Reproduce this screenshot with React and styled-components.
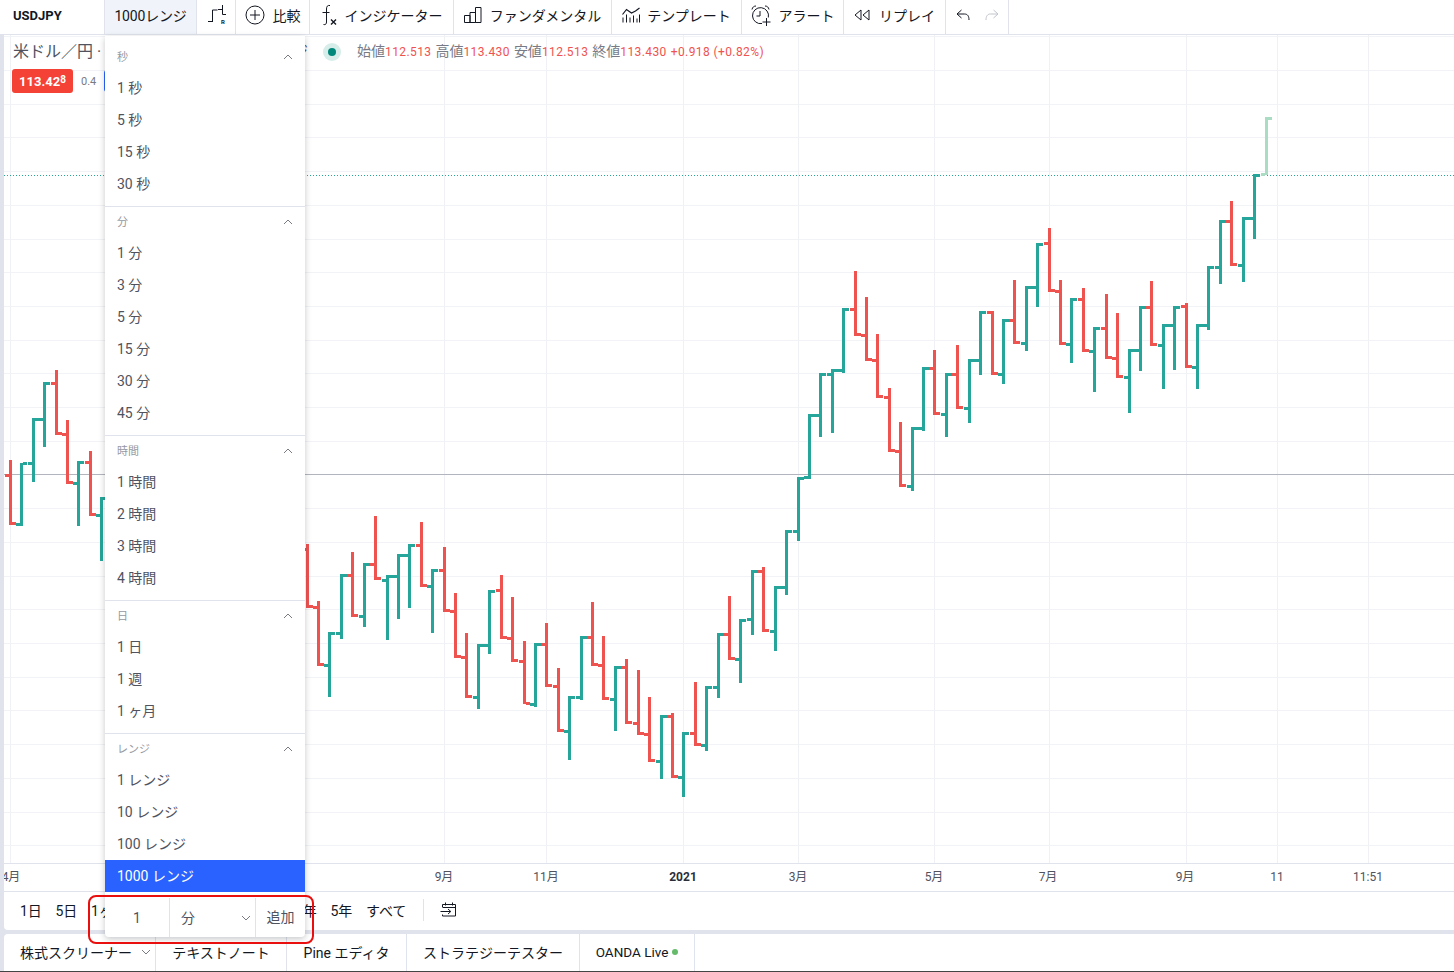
import React from 'react';
import styled, { createGlobalStyle } from 'styled-components';

const GlobalStyle = createGlobalStyle`
  html, body { margin: 0; padding: 0; background: #e0e3eb; }
  body { font-family: Roboto, "Noto Sans CJK JP", sans-serif; color: #131722; }
  * { box-sizing: border-box; }
`;

const GREEN = '#26a69a';
const RED = '#ef5350';
const PALE = '#a9dcc3';

// bars read off the crops: [stem x, high, low, open, close, colour], grouped by crop origin
const groups = [
  { ox: 0, oy: 360, bars: [
    [31, 300, 494, 346, 490, RED], [64, 308, 497, 494, 310, GREEN], [100, 175, 365, 310, 178, GREEN],
    [133, 67, 260, 178, 70, GREEN], [169, 30, 224, 70, 220, RED], [202, 180, 372, 223, 367, RED],
    [235, 304, 497, 370, 307, GREEN], [271, 273, 467, 307, 463, RED], [304, 411, 603, 466, 414, GREEN],
  ] },
  { ox: 300, oy: 500, bars: [
    [22, 132, 323, 148, 320, RED], [55, 303, 497, 323, 493, RED], [88, 397, 591, 496, 400, GREEN],
    [124, 223, 417, 400, 226, GREEN], [157, 156, 350, 226, 346, RED], [193, 190, 381, 349, 193, GREEN],
    [226, 48, 240, 193, 235, RED], [262, 226, 420, 241, 229, GREEN], [295, 163, 357, 229, 166, GREEN],
    [328, 132, 324, 166, 136, GREEN], [364, 66, 261, 136, 256, RED], [397, 208, 399, 259, 211, GREEN],
    [433, 141, 335, 211, 331, RED], [466, 279, 474, 334, 469, RED], [499, 399, 593, 472, 589, RED],
    [535, 433, 627, 592, 436, GREEN], [568, 271, 462, 436, 274, GREEN], [604, 225, 416, 271, 412, RED],
    [637, 291, 486, 415, 481, RED], [673, 423, 613, 484, 609, RED], [706, 430, 621, 612, 433, GREEN],
    [739, 369, 560, 433, 556, RED], [775, 504, 695, 559, 691, RED], [808, 589, 780, 694, 592, GREEN],
    [844, 408, 600, 592, 412, GREEN], [877, 306, 497, 412, 493, RED], [910, 408, 600, 496, 595, RED],
    [946, 499, 693, 598, 502, GREEN], [979, 477, 671, 502, 667, RED], [1015, 510, 704, 670, 700, RED],
    [1048, 591, 786, 703, 781, RED], [1084, 646, 837, 784, 649, GREEN], [1117, 639, 833, 649, 829, RED],
    [1150, 697, 891, 832, 700, GREEN], [1186, 546, 737, 700, 733, RED], [1219, 559, 753, 736, 562, GREEN],
    [1255, 399, 593, 562, 402, GREEN],
  ] },
  { ox: 670, oy: 260, bars: [
    [178, 1008, 1199, 1122, 1195, RED], [211, 1077, 1269, 1197, 1080, GREEN], [247, 930, 1125, 1078, 933, GREEN],
    [280, 921, 1115, 933, 1110, RED], [316, 979, 1173, 1113, 982, GREEN], [349, 811, 1005, 982, 814, GREEN],
    [385, 652, 843, 814, 655, GREEN], [418, 463, 657, 652, 466, GREEN], [451, 340, 531, 466, 343, GREEN],
    [487, 327, 519, 343, 331, GREEN], [520, 144, 339, 331, 148, GREEN], [556, 33, 228, 148, 223, RED],
    [589, 111, 303, 226, 298, RED], [622, 222, 414, 301, 409, RED], [658, 384, 576, 412, 571, RED],
    [691, 486, 681, 574, 676, RED], [727, 502, 693, 679, 505, GREEN], [760, 321, 513, 505, 325, GREEN],
    [793, 270, 465, 325, 460, RED], [829, 340, 531, 463, 343, GREEN], [862, 255, 447, 343, 442, RED],
    [898, 298, 489, 445, 301, GREEN], [931, 153, 345, 301, 157, GREEN], [967, 153, 345, 157, 341, RED],
    [1000, 177, 372, 343, 181, GREEN],
  ] },
  { ox: 1000, oy: 100, bars: [
    [43, 540, 732, 660, 727, RED], [79, 558, 753, 730, 562, GREEN], [112, 429, 621, 562, 433, GREEN],
    [148, 384, 576, 430, 571, RED], [181, 540, 735, 574, 730, RED], [214, 594, 789, 733, 598, GREEN],
    [250, 564, 756, 598, 751, RED], [283, 681, 876, 754, 685, GREEN], [319, 582, 777, 685, 772, RED],
    [352, 639, 834, 775, 829, RED], [388, 747, 939, 832, 751, GREEN], [421, 618, 813, 751, 622, GREEN],
    [454, 543, 738, 622, 733, RED], [490, 672, 867, 736, 676, GREEN], [523, 618, 810, 676, 622, GREEN],
    [559, 609, 804, 619, 799, RED], [592, 672, 867, 802, 676, GREEN], [625, 498, 690, 676, 502, GREEN],
    [661, 360, 552, 502, 364, GREEN], [694, 303, 498, 364, 493, RED], [730, 351, 546, 496, 355, GREEN],
    [763, 222, 417, 355, 226, GREEN], [799, 51, 226, 223, 55, PALE],
  ] },
];

const bars = groups.flatMap(({ ox, oy, bars }) =>
  bars.map(([x, h, l, o, c, color]) => ({
    x: Math.round(ox + x / 3 - 1.5),
    high: Math.round(oy + h / 3),
    low: Math.round(oy + l / 3),
    open: Math.round(oy + o / 3 - 1.5),
    close: Math.round(oy + c / 3 - 1.5),
    color,
  }))
);

const gridY = [36, 70, 104, 137, 171, 205, 239, 272, 306, 340, 373, 407, 441, 508, 542, 576, 609, 643, 677, 710, 744, 778, 812, 845];
const gridX = [10, 444, 546, 683, 798, 934, 1049, 1186, 1277, 1368];

const Page = styled.div`
  position: relative;
  width: 1454px;
  height: 972px;
  overflow: hidden;
  display: flex;
  flex-direction: column;
  background: #e0e3eb;
`;

const TopBar = styled.div`
  display: flex;
  height: 34px;
  background: #fff;
  margin-bottom: 1px;
  flex: none;
`;

const TopItem = styled.div`
  width: ${p => p.$w}px;
  flex: none;
  display: flex;
  align-items: center;
  justify-content: ${p => (p.$left ? 'flex-start' : 'center')};
  gap: ${p => p.$gap || 8}px;
  padding-left: ${p => p.$pl || 0}px;
  padding-bottom: 4px;
  border-right: 1px solid #e0e3eb;
  background: ${p => (p.$active ? '#f0f3fa' : '#fff')};
  font-size: ${p => (p.$bold ? 13 : 14)}px;
  font-weight: ${p => (p.$bold ? 700 : 400)};
  letter-spacing: ${p => (p.$active ? -0.2 : 0)}px;
  white-space: nowrap;
`;

const TopRest = styled.div`
  flex: 1;
  background: #fff;
`;

const Body = styled.div`
  flex: 1;
  min-height: 0;
  display: flex;
  flex-direction: column;
  padding-left: 4px;
  gap: 4px;
`;

const ChartPanel = styled.div`
  height: 895px;
  flex: none;
  display: flex;
  flex-direction: column;
  background: #fff;
  border-bottom-left-radius: 4px;
  overflow: hidden;
`;

const Chart = styled.div`
  position: relative;
  height: 828px;
  flex: none;
`;

const ChartSvg = styled.svg`
  display: block;
`;

const Legend = styled.div`
  position: absolute;
  left: 9px;
  top: 7px;
  width: 295px;
  display: flex;
  flex-direction: column;
  gap: 7px;
`;

const Title = styled.div`
  display: flex;
  justify-content: space-between;
  font-size: 16px;
  line-height: 20px;
  color: #50535e;
  white-space: nowrap;
`;

const PriceRow = styled.div`
  display: flex;
  align-items: center;
  gap: 8px;
  margin-left: -1px;
`;

const PriceTag = styled.div`
  width: 61px;
  height: 24px;
  border-radius: 3px;
  background: #f44336;
  color: #fff;
  font-size: 13px;
  font-weight: 700;
  display: flex;
  align-items: center;
  justify-content: center;
`;

const PriceSup = styled.span`
  font-size: 10px;
  position: relative;
  top: -2px;
`;

const Spread = styled.span`
  font-size: 11px;
  color: #787b86;
`;

const AskTag = styled.div`
  width: 30px;
  height: 22px;
  border-radius: 3px;
  background: #2962ff;
`;

const Ohlc = styled.div`
  position: absolute;
  left: 319px;
  top: 7px;
  height: 20px;
  display: flex;
  align-items: center;
`;

const OhlcText = styled.div`
  display: flex;
  align-items: baseline;
  gap: 4px;
  font-size: 14px;
  line-height: 20px;
  color: #787b86;
  white-space: nowrap;
  position: relative;
  top: -1px;
`;

const Status = styled.span`
  width: 18px;
  height: 18px;
  border-radius: 50%;
  background: #d6ede9;
  display: flex;
  align-items: center;
  justify-content: center;
  margin-right: 16px;
  &::after {
    content: '';
    width: 8px;
    height: 8px;
    border-radius: 50%;
    background: #00897b;
  }
`;

const OhlcValue = styled.span`
  font-size: 12px;
  color: #ef5350;
  letter-spacing: 0.4px;
`;

const TimeAxis = styled.div`
  position: relative;
  height: 29px;
  flex: none;
  border-top: 1px solid #e0e3eb;
  border-bottom: 1px solid #e0e3eb;
  overflow: hidden;
`;

const AxisLabel = styled.span`
  position: absolute;
  top: 5px;
  left: ${p => p.$x - 4}px;
  transform: translateX(-50%);
  font-size: 12px;
  line-height: 16px;
  font-weight: ${p => (p.$bold ? 700 : 400)};
  color: ${p => (p.$bold ? '#2a2e39' : '#50535e')};
  white-space: nowrap;
`;

const RangeBar = styled.div`
  flex: 1;
  display: flex;
  align-items: center;
  padding: 0 0 2px 16px;
  font-size: 14px;
  color: #131722;
`;

const RangeItem = styled.span`
  margin-right: 13.6px;
  white-space: nowrap;
`;

const RangeDivider = styled.span`
  width: 1px;
  height: 22px;
  background: #e0e3eb;
  margin: 0 16px 0 3px;
`;

const Tabs = styled.div`
  flex: 1;
  display: flex;
  background: #fff;
  border-top-left-radius: 4px;
`;

const Tab = styled.div`
  width: ${p => p.$w}px;
  flex: none;
  display: flex;
  align-items: center;
  justify-content: ${p => (p.$pl ? 'flex-start' : 'center')};
  gap: ${p => p.$gap || 0}px;
  padding-left: ${p => p.$pl || 0}px;
  padding-bottom: 2px;
  border-right: 1px solid #e0e3eb;
  font-size: ${p => p.$size || 14}px;
  white-space: nowrap;
`;

const LiveDot = styled.span`
  width: 6px;
  height: 6px;
  border-radius: 50%;
  background: #66bb6a;
`;

const BottomLine = styled.div`
  height: 1px;
  flex: none;
  background: #444;
`;

const Menu = styled.div`
  position: absolute;
  left: 105px;
  top: 36px;
  width: 200px;
  height: 901px;
  padding-top: 6px;
  background: #fff;
  border-radius: 0 0 4px 4px;
  box-shadow: 0 2px 6px rgba(19, 23, 34, 0.24);
  display: flex;
  flex-direction: column;
`;

const Section = styled.div`
  padding-bottom: ${p => (p.$last ? 0 : 6)}px;
  border-bottom: ${p => (p.$last ? 'none' : '1px solid #e0e3eb')};
`;

const SectionHead = styled.div`
  height: 30px;
  display: flex;
  align-items: center;
  justify-content: space-between;
  padding: 0 12px 2px;
  font-size: 11px;
  color: #9598a1;
  svg { margin-top: 2px; }
`;

const MenuItem = styled.div`
  height: 32px;
  display: flex;
  align-items: center;
  padding: 0 0 2px 12px;
  font-size: 14px;
  color: ${p => (p.$active ? '#fff' : '#50535e')};
  background: ${p => (p.$active ? '#2962ff' : 'transparent')};
`;

const AddRow = styled.div`
  margin-top: 6px;
  height: 39px;
  display: flex;
  font-size: 14px;
  color: #50535e;
`;

const AddValue = styled.div`
  width: 65px;
  display: flex;
  align-items: center;
  justify-content: center;
  border-right: 1px solid #e0e3eb;
`;

const AddUnit = styled.div`
  width: 86px;
  display: flex;
  align-items: center;
  justify-content: space-between;
  padding: 0 4px 2px 11px;
  border-right: 1px solid #e0e3eb;
  svg { margin-top: 2px; }
`;

const AddButton = styled.div`
  flex: 1;
  display: flex;
  align-items: center;
  justify-content: center;
  padding-bottom: 3px;
`;

const Highlight = styled.div`
  position: absolute;
  left: 88px;
  top: 895px;
  width: 226px;
  height: 49px;
  border: 2px solid #ea0f0f;
  border-radius: 8px;
  pointer-events: none;
`;

const Icon = styled.svg`
  flex: none;
  display: block;
  fill: none;
  stroke: ${p => p.$color || '#131722'};
  stroke-width: 1;
`;

const Chevron = ({ up }) => (
  <Icon width="10" height="6" viewBox="0 0 10 6" $color="#787b86">
    <path d={up ? 'M1 5l4-4 4 4' : 'M1 1l4 4 4-4'} />
  </Icon>
);

const BarStyleIcon = () => (
  <Icon width="22" height="22" viewBox="0 0 22 22">
    <path d="M3 17.500h4.500M7.500 18V6H12.500M17.500 1v9.500M13 5.500h4.500M17.500 10.500H21" />
    <text x="16" y="19.500" fontSize="6" fontWeight="700" stroke="none" fill="#131722" fontFamily="Roboto, sans-serif">R</text>
  </Icon>
);

const CompareIcon = () => (
  <Icon width="20" height="20" viewBox="0 0 20 20">
    <circle cx="10" cy="10" r="9" />
    <path d="M10 5v10M5 10h10" />
  </Icon>
);

const FxIcon = () => (
  <Icon width="16" height="22" viewBox="0 0 16 22">
    <path d="M9 1.500C6.500 1 5.500 2.500 5.500 5v13c0 2-1 3-3 2.500M1.500 8.500h7" />
    <path d="M10 15.500l5 5M15 15.500l-5 5" strokeWidth="1.400" />
  </Icon>
);

const FundamentalIcon = () => (
  <Icon width="18" height="16" viewBox="0 0 18 16">
    <path d="M.5 15.500v-7h5.500v7zM6 15.500v-10h5.500v10zM11.500 15.500V.5H17v15z" />
  </Icon>
);

const TemplateIcon = () => (
  <Icon width="18" height="16" viewBox="0 0 18 16">
    <path d="M.5 7.500l4-5 5 3.500 4-2 4-3" strokeWidth="1.200" />
    <path d="M1 15.500v-5M4.500 15.500v-8M8 15.500v-5M11.500 15.500v-7M15 15.500v-4M17.500 15.500v-8" />
  </Icon>
);

const AlertIcon = () => (
  <Icon width="21" height="21" viewBox="0 0 21 21">
    <path d="M11 18.500A8 8 0 1 1 17.300 12.500" />
    <path d="M1 4.500C1.500 2 3 1 5 1M18 4.500C17.500 2 16 1 14 1M9 6v5H5.500M15.500 13v8M11.500 17h8" />
  </Icon>
);

const ReplayIcon = () => (
  <Icon width="16" height="12" viewBox="0 0 16 12">
    <path d="M7 1L1 6l6 5zM15 1L9 6l6 5z" />
  </Icon>
);

const UndoIcon = ({ flip, color }) => (
  <Icon
    width="14"
    height="12"
    viewBox="0 0 14 12"
    $color={color}
    style={flip ? { transform: 'scaleX(-1)' } : undefined}
  >
    <path d="M5.500 1L1 5l4.500 4M1 5h7.500c3 0 4.500 2 4.500 6" />
  </Icon>
);

const GotoIcon = () => (
  <Icon width="17" height="16" viewBox="0 0 17 16">
    <path d="M2.500 5V2.500h13V14H2.500v-1.500M2.500 5.500h13M5.500 .5v3M12.500 .5v3M.5 9.500h10M8 7l2.800 2.500L8 12" />
  </Icon>
);

const sections = [
  { title: '秒', items: ['1 秒', '5 秒', '15 秒', '30 秒'] },
  { title: '分', items: ['1 分', '3 分', '5 分', '15 分', '30 分', '45 分'] },
  { title: '時間', items: ['1 時間', '2 時間', '3 時間', '4 時間'] },
  { title: '日', items: ['1 日', '1 週', '1 ヶ月'] },
  { title: 'レンジ', items: ['1 レンジ', '10 レンジ', '100 レンジ', '1000 レンジ'] },
];

const axisLabels = [
  { x: 11, text: '4月' }, { x: 444, text: '9月' }, { x: 546, text: '11月' },
  { x: 683, text: '2021', bold: true }, { x: 798, text: '3月' }, { x: 934, text: '5月' },
  { x: 1048, text: '7月' }, { x: 1185, text: '9月' }, { x: 1277, text: '11' }, { x: 1368, text: '11:51' },
];

const ohlc = [['始値', '112.513'], ['高値', '113.430'], ['安値', '112.513'], ['終値', '113.430']];

export default function App() {
  return (
    <Page>
      <GlobalStyle />
      <TopBar>
        <TopItem $w={105} $left $pl={13} $bold>USDJPY</TopItem>
        <TopItem $w={92} $active>1000レンジ</TopItem>
        <TopItem $w={39}><BarStyleIcon /></TopItem>
        <TopItem $w={74}><CompareIcon />比較</TopItem>
        <TopItem $w={144}><FxIcon />インジケーター</TopItem>
        <TopItem $w={158}><FundamentalIcon />ファンダメンタル</TopItem>
        <TopItem $w={130} $gap={7}><TemplateIcon />テンプレート</TopItem>
        <TopItem $w={102} $gap={7}><AlertIcon />アラート</TopItem>
        <TopItem $w={102} $gap={9}><ReplayIcon />リプレイ</TopItem>
        <TopItem $w={63} $gap={15}>
          <UndoIcon />
          <UndoIcon flip color="#c1c4cd" />
        </TopItem>
        <TopRest />
      </TopBar>
      <Body>
        <ChartPanel>
          <Chart>
            <ChartSvg width="1450" height="828" viewBox="4 35 1450 828" shapeRendering="crispEdges">
              {gridY.map(y => <rect key={y} x="4" y={y} width="1450" height="1" fill="#f2f3f6" />)}
              {gridX.map(x => <rect key={x} x={x} y="35" width="1" height="828" fill="#f0f1f4" />)}
              <rect x="4" y="474" width="1450" height="1" fill="#b2b5be" />
              <line x1="4" x2="1454" y1="175.500" y2="175.500" stroke={GREEN} strokeDasharray="1 2" />
              {bars.map((b, i) => (
                <g key={i} fill={b.color}>
                  <rect x={b.x} y={b.high} width="3" height={b.low - b.high} />
                  <rect x={b.x - 4} y={b.open} width="4" height="3" />
                  <rect x={b.x + 3} y={b.close} width="4" height="3" />
                </g>
              ))}
            </ChartSvg>
            <Legend>
              <Title>
                <span>米ドル／円 ·</span>
                <span>ジ</span>
              </Title>
              <PriceRow>
                <PriceTag>113.42<PriceSup>8</PriceSup></PriceTag>
                <Spread>0.4</Spread>
                <AskTag />
              </PriceRow>
            </Legend>
            <Ohlc>
              <Status />
              <OhlcText>
                {ohlc.map(([name, value]) => (
                  <span key={name}>{name}<OhlcValue>{value}</OhlcValue></span>
                ))}
                <OhlcValue>+0.918 (+0.82%)</OhlcValue>
              </OhlcText>
            </Ohlc>
          </Chart>
          <TimeAxis>
            {axisLabels.map(l => (
              <AxisLabel key={l.x} $x={l.x} $bold={l.bold}>{l.text}</AxisLabel>
            ))}
          </TimeAxis>
          <RangeBar>
            {['1日', '5日', '1ヶ月', '3ヶ月', '6ヶ月', '年初来', '1年', '5年', 'すべて'].map(r => (
              <RangeItem key={r}>{r}</RangeItem>
            ))}
            <RangeDivider />
            <GotoIcon />
          </RangeBar>
        </ChartPanel>
        <Tabs>
          <Tab $w={152} $gap={9} $pl={16}>株式スクリーナー<Chevron /></Tab>
          <Tab $w={131}>テキストノート</Tab>
          <Tab $w={120}>Pine エディタ</Tab>
          <Tab $w={173}>ストラテジーテスター</Tab>
          <Tab $w={115} $gap={4} $size={13.5}>OANDA Live<LiveDot /></Tab>
        </Tabs>
      </Body>
      <BottomLine />
      <Menu>
        {sections.map((s, i) => (
          <Section key={s.title} $last={i === sections.length - 1}>
            <SectionHead>{s.title}<Chevron up /></SectionHead>
            {s.items.map(item => (
              <MenuItem key={item} $active={item === '1000 レンジ'}>{item}</MenuItem>
            ))}
          </Section>
        ))}
        <AddRow>
          <AddValue>1</AddValue>
          <AddUnit>分<Chevron /></AddUnit>
          <AddButton>追加</AddButton>
        </AddRow>
      </Menu>
      <Highlight />
    </Page>
  );
}
